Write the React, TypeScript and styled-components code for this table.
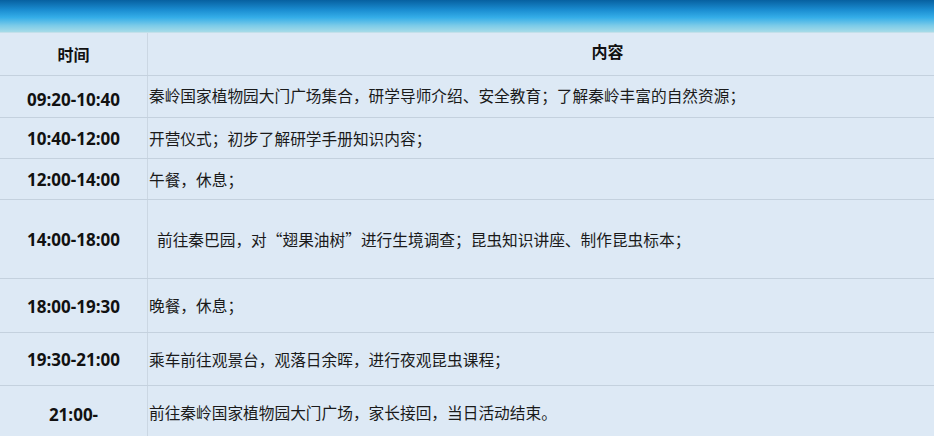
import React from "react";
import styled, { createGlobalStyle } from "styled-components";

const GlobalStyle = createGlobalStyle`
  html, body {
    margin: 0;
    padding: 0;
    background: #dde9f5;
    overflow: hidden;
  }
  body {
    font-family: "Noto Sans CJK SC", "Noto Sans", sans-serif;
    color: #111;
  }
`;

const Page = styled.div`
  width: 100vw;
  height: 100vh;
  overflow: hidden;
  background: #dde9f5;
`;

const TopBar = styled.div`
  height: 32px;
  background: linear-gradient(
    to bottom,
    #0760a0 0%,
    #1a8cd0 30%,
    #35aee8 55%,
    #7ccbe8 80%,
    #a6dbe8 100%
  );
  border-bottom: 1px solid #c4e0ea;
`;

const Table = styled.table`
  width: 1068px;
  border-collapse: collapse;
  table-layout: fixed;
  background: #dde9f5;
  line-height: 20px;
`;

const HeadRow = styled.tr`
  height: 42px;
`;

const HeadCell = styled.th<{ $w?: number; $shift?: number }>`
  width: ${(p) => (p.$w ? `${p.$w}px` : "auto")};
  padding: ${(p) => (p.$shift ? `0 0 ${p.$shift}px 0` : "0")};
  font-size: 16px;
  font-weight: 700;
  text-align: center;
  vertical-align: middle;
  border-right: 1px solid #cbd7e3;
  border-bottom: 1px solid #c4d1de;
`;

const Row = styled.tr<{ $h: number }>`
  height: ${(p) => p.$h}px;
`;

const TimeCell = styled.td<{ $top: number }>`
  width: 147px;
  padding: ${(p) => p.$top}px 0 0 0;
  font-size: 17px;
  font-weight: 700;
  text-align: center;
  vertical-align: middle;
  border-right: 1px solid #cbd7e3;
  border-bottom: 1px solid #c4d1de;
  font-family: "Open Sans", "Noto Sans CJK SC", sans-serif;
  color: #111;
`;

const ContentCell = styled.td<{ $indent?: number; $top: number }>`
  padding: ${(p) => p.$top}px 0 0 ${(p) => 1 + (p.$indent ?? 0)}px;
  font-size: 15.7px;
  font-weight: 400;
  text-align: left;
  vertical-align: middle;
  white-space: nowrap;
  border-bottom: 1px solid #c4d1de;
  color: #1a1a1a;
`;

interface ScheduleItem {
  time: string;
  text: string;
  height: number;
  indent?: number;
  timeTop?: number;
  textTop?: number;
}

const schedule: ScheduleItem[] = [
  {
    time: "09:20-10:40",
    text: "秦岭国家植物园大门广场集合，研学导师介绍、安全教育；了解秦岭丰富的自然资源；",
    height: 42,
    timeTop: 7,
    textTop: 0,
  },
  { time: "10:40-12:00", text: "开营仪式；初步了解研学手册知识内容；", height: 41 },
  { time: "12:00-14:00", text: "午餐，休息；", height: 41 },
  {
    time: "14:00-18:00",
    text: "前往秦巴园，对“翅果油树”进行生境调查；昆虫知识讲座、制作昆虫标本；",
    height: 79,
    indent: 8,
  },
  { time: "18:00-19:30", text: "晚餐，休息；", height: 54 },
  { time: "19:30-21:00", text: "乘车前往观景台，观落日余晖，进行夜观昆虫课程；", height: 53 },
  { time: "21:00-", text: "前往秦岭国家植物园大门广场，家长接回，当日活动结束。", height: 56, textTop: 0 },
];

export default function App() {
  return (
    <>
      <GlobalStyle />
      <Page>
        <TopBar />
        <Table>
          <thead>
            <HeadRow>
              <HeadCell $w={147}>时间</HeadCell>
              <HeadCell $shift={6}>内容</HeadCell>
            </HeadRow>
          </thead>
          <tbody>
            {schedule.map((item, idx) => (
              <Row key={idx} $h={item.height}>
                <TimeCell $top={item.timeTop ?? 3}>{item.time}</TimeCell>
                <ContentCell $indent={item.indent} $top={item.textTop ?? 2}>
                  {item.text}
                </ContentCell>
              </Row>
            ))}
          </tbody>
        </Table>
      </Page>
    </>
  );
}
